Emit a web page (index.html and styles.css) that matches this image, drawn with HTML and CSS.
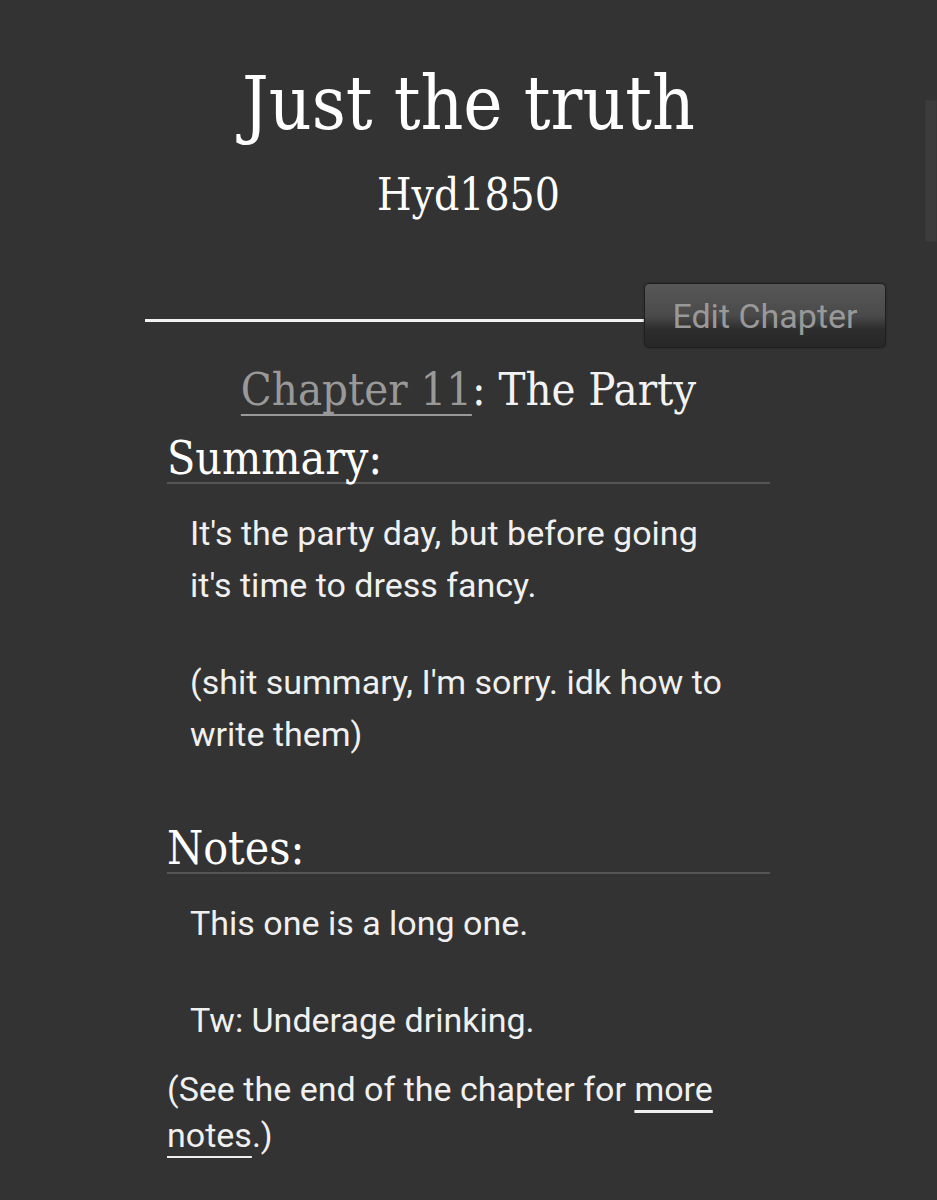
FILE: index.html
```html
<!DOCTYPE html>
<html lang="en">
<head>
    <meta charset="UTF-8">
    <meta name="viewport" content="width=device-width, initial-scale=1.0">
    <title>Just the truth - Chapter 11</title>
    <link rel="stylesheet" href="styles.css">
</head>
<body>

<!-- Work header -->
<div class="preface">
    <h2 class="title">Just the truth</h2>
    <h3 class="byline">Hyd1850</h3>
</div>

<!-- Chapter navigation -->
<div class="chapter-nav">
    <div class="nav-rule"></div>
    <button class="btn-edit">Edit Chapter</button>
</div>

<div class="chapter-preface">
    <h3 class="chapter-title"><a href="#" class="chapter-link">Chapter 11</a>: The Party</h3>

    <div class="summary module">
        <h3 class="heading">Summary:</h3>
        <blockquote class="userstuff">
            <p>It's the party day, but before going it's time to dress fancy.</p>
            <p>(shit summary, I'm sorry. idk how to write them)</p>
        </blockquote>
    </div>

    <div class="notes module">
        <h3 class="heading">Notes:</h3>
        <blockquote class="userstuff">
            <p>This one is a long one.</p>
            <p>Tw: Underage drinking.</p>
        </blockquote>
        <p class="jump">(See the end of the chapter for <a href="#">more notes</a>.)</p>
    </div>
</div>

<!-- Scroll indicator -->
<div class="scroll-thumb"></div>

</body>
</html>
```

FILE: styles.css
```css
body {
    margin: 0;
    background-color: #333;
    color: #eee;
    font-family: Roboto, "Liberation Sans", sans-serif;
}
a {
    color: inherit;
}
.preface {
    text-align: center;
    padding-top: 55px;
    color: #fff;
    font-family: "DejaVu Serif Condensed", "DejaVu Serif", serif;
    font-stretch: condensed;
}
.title {
    font-size: 74px;
    font-weight: normal;
    line-height: 96px;
    margin: 0;
}
.byline {
    font-size: 44px;
    font-weight: normal;
    line-height: 56px;
    margin: 16px 0 0;
}
.chapter-nav {
    display: flex;
    align-items: center;
    margin: 60px 0 0 145px;
    width: 741px;
}
.nav-rule {
    flex: 1;
    height: 3px;
    background-color: #f2f2f2;
    margin-top: 10px;
}
.btn-edit {
    width: 242px;
    height: 65px;
    padding: 0;
    font-family: Roboto, sans-serif;
    font-stretch: normal;
    font-size: 34px;
    color: #999;
    background: linear-gradient(#575757 0%, #4a4a4a 50%, #2d2d2d 72%, #272727 100%);
    border: 1px solid #1f1f1f;
    border-radius: 5px;
    box-shadow: 0 0 2px #222;
    cursor: pointer;
}
.chapter-preface {
    width: 603px;
    margin-left: 167px;
    font-family: "DejaVu Serif Condensed", "DejaVu Serif", serif;
    font-stretch: condensed;
}
.chapter-title {
    text-align: center;
    font-size: 45px;
    font-weight: normal;
    line-height: 56px;
    margin: 14px 0 0;
    color: #f2f2f2;
}
.chapter-link {
    color: #999;
    text-decoration: underline 2px;
    text-underline-offset: 9px;
}
.heading {
    font-size: 46px;
    font-weight: normal;
    line-height: 48px;
    margin: 0;
    color: #fff;
    border-bottom: 2px solid #555;
}
.summary {
    margin-top: 16px;
}
.userstuff {
    margin: 23px 23px 0;
    font-family: Roboto, "Liberation Sans", sans-serif;
    font-stretch: normal;
    font-size: 34px;
    line-height: 52px;
    color: #f0f0f0;
}
.userstuff p {
    margin: 0 0 45px;
}
.notes {
    margin-top: 64px;
}
.jump {
    margin: -25px 0 0;
    font-family: Roboto, "Liberation Sans", sans-serif;
    font-stretch: normal;
    font-size: 34px;
    line-height: 46px;
    color: #f0f0f0;
}
.jump a {
    text-decoration: underline 3px;
    text-underline-offset: 9px;
}
.scroll-thumb {
    position: fixed;
    top: 100px;
    right: 0;
    width: 10px;
    height: 140px;
    background-color: #3c3c3c;
    border: 1px solid #383838;
}
```
